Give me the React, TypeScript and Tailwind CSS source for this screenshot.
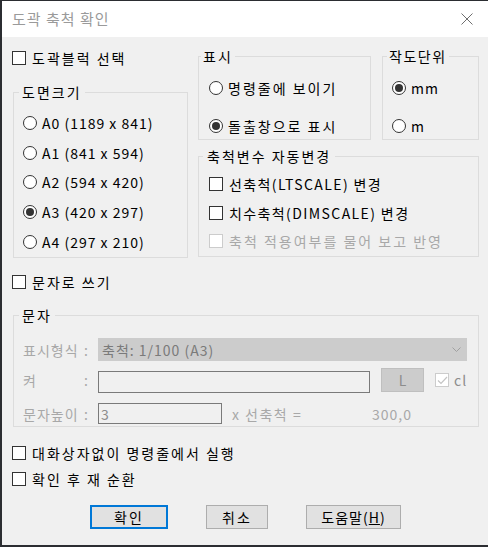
import React from 'react';

function Check({ checked = false, disabled = false }: { checked?: boolean; disabled?: boolean }) {
  return (
    <span
      className={`flex h-[14px] w-[14px] shrink-0 items-center justify-center border ${
        disabled ? 'border-[#cccccc] bg-white' : 'border-[#333333] bg-white'
      }`}
    >
      {checked && (
        <svg width="11" height="9" viewBox="0 0 11 9">
          <path d="M1 4.5 L4 7.5 L10 1" fill="none" stroke={disabled ? '#c4c4c4' : '#333'} strokeWidth="1.2" />
        </svg>
      )}
    </span>
  );
}

function Radio({ checked = false }: { checked?: boolean }) {
  return (
    <span className="flex h-[14px] w-[14px] shrink-0 items-center justify-center rounded-full border border-[#333333] bg-white">
      {checked && <span className="h-[8px] w-[8px] rounded-full bg-[#333333]" />}
    </span>
  );
}

function CheckRow({ label, disabled = false, tight = false }: { label: string; disabled?: boolean; tight?: boolean }) {
  return (
    <div className="flex h-[16px] items-center gap-[6px]">
      <Check disabled={disabled} />
      <span className={`${disabled ? 'text-[#a8a8a8]' : 'text-black'} ${tight ? 'tracking-[1.4px]' : ''}`}>{label}</span>
    </div>
  );
}

function RadioRow({ label, checked = false, tight = false }: { label: string; checked?: boolean; tight?: boolean }) {
  return (
    <div className="flex h-[16px] items-center gap-[5px]">
      <Radio checked={checked} />
      <span className={tight ? 'tracking-[1px]' : ''}>{label}</span>
    </div>
  );
}

function FieldLabel({ text }: { text: string }) {
  return (
    <div className="ml-[4px] flex w-[66px] shrink-0 justify-between tracking-[1px] text-[#a8a8a8]">
      <span>{text}</span>
      <span>:</span>
    </div>
  );
}

const sizes = [
  { label: 'A0 (1189 x 841)', checked: false },
  { label: 'A1 (841 x 594)', checked: false },
  { label: 'A2 (594 x 420)', checked: false },
  { label: 'A3 (420 x 297)', checked: true },
  { label: 'A4 (297 x 210)', checked: false },
];

export default function App() {
  return (
    <div className="flex h-[547px] w-[488px] flex-col overflow-hidden border-b-2 border-l-2 border-t border-[#2b2d31] bg-[#f0f0f0] font-[family-name:'Noto_Sans_CJK_KR',sans-serif] text-[14px] leading-[16px] tracking-[2px] text-black">
      {/* title bar */}
      <div className="flex h-[36px] shrink-0 items-center justify-between bg-white pl-[10px] pr-[15px]">
        <span className="text-[15px] tracking-[1px] text-[#9a9a9a]">도곽 축척 확인</span>
        <svg width="12" height="12" viewBox="0 0 12 12">
          <path d="M0.5 0.5 L11.5 11.5 M11.5 0.5 L0.5 11.5" stroke="#6e6e6e" strokeWidth="1" />
        </svg>
      </div>

      <div className="flex flex-col pl-[10px]">
        {/* top section */}
        <div className="flex pt-[11px]">
          <div className="flex w-[176px] flex-col">
            <div className="mt-[2px]">
              <CheckRow label="도곽블럭 선택" />
            </div>
            <fieldset className="ml-[1px] mt-[18px] h-[174px] w-[175px] border border-[#dcdcdc] pl-[5px]">
              <legend className="px-[3px] leading-[16px]">도면크기</legend>
              <div className="ml-[4px] mt-[8px] flex flex-col">
                {sizes.map((s) => (
                  <div key={s.label} className="flex h-[29.75px] items-center">
                    <RadioRow label={s.label} checked={s.checked} tight />
                  </div>
                ))}
              </div>
            </fieldset>
          </div>

          <div className="ml-[10px] flex flex-col">
            <div className="flex gap-[11px]">
              <fieldset className="h-[92px] w-[173px] border border-[#dcdcdc] pl-[2px]">
                <legend className="px-[2px] leading-[16px]">표시</legend>
                <div className="ml-[8px] mt-[16px] flex flex-col gap-[22px]">
                  <RadioRow label="명령줄에 보이기" />
                  <RadioRow label="돌출창으로 표시" checked />
                </div>
              </fieldset>
              <fieldset className="h-[92px] w-[97px] border border-[#dcdcdc] pl-[4px]">
                <legend className="px-[2px] leading-[16px] tracking-[1.5px]">작도단위</legend>
                <div className="ml-[5px] mt-[16px] flex flex-col gap-[22px]">
                  <RadioRow label="mm" checked tight />
                  <RadioRow label="m" tight />
                </div>
              </fieldset>
            </div>
            <fieldset className="mt-[8px] h-[109px] w-[281px] border border-[#dcdcdc] pl-[4px]">
              <legend className="px-[4px] leading-[16px]">축척변수 자동변경</legend>
              <div className="ml-[6px] mt-[12px] flex flex-col gap-[12.5px]">
                <CheckRow label="선축척(LTSCALE) 변경" tight />
                <CheckRow label="치수축척(DIMSCALE) 변경" tight />
                <CheckRow label="축척 적용여부를 물어 보고 반영" disabled />
              </div>
            </fieldset>
          </div>
        </div>

        <div className="mt-[16px]">
          <CheckRow label="문자로 쓰기" />
        </div>

        {/* text group */}
        <fieldset className="ml-[1px] mt-[17px] h-[120px] w-[466px] border border-[#dcdcdc] pl-[5px]">
          <legend className="px-[3px] leading-[16px]">문자</legend>
          <div className="mt-[15px] flex items-center">
            <FieldLabel text="표시형식" />
            <div className="ml-[9px] flex h-[23px] w-[369px] items-center justify-between border border-[#cccccc] bg-[#cccccc] pl-[3px] pr-[5px] tracking-[1px] text-[#7a7a7a]">
              <span>축척: 1/100 (A3)</span>
              <svg width="9" height="5" viewBox="0 0 9 5">
                <path d="M0.5 0.5 L4.5 4.5 L8.5 0.5" fill="none" stroke="#a0a0a0" strokeWidth="1" />
              </svg>
            </div>
          </div>
          <div className="mt-[6px] flex items-center">
            <FieldLabel text="켜" />
            <div className="ml-[9px] mt-[4px] h-[22px] w-[272px] border border-[#7a7a7a]" />
            <div className="ml-[11px] flex h-[24px] w-[43px] items-center justify-center border border-[#bfbfbf] bg-[#cccccc] tracking-normal text-[#8c8c8c]">
              L
            </div>
            <div className="ml-[11px] flex items-center gap-[5px]">
              <Check checked disabled />
              <span className="tracking-[1px] text-[#8c8c8c]">cl</span>
            </div>
          </div>
          <div className="mt-[10px] flex items-center">
            <FieldLabel text="문자높이" />
            <div className="ml-[9px] flex h-[21px] w-[124px] items-center border border-[#7a7a7a] pl-[2px] text-[#8c8c8c]">
              3
            </div>
            <span className="ml-[10px] w-[140px] shrink-0 tracking-[1.5px] text-[#a8a8a8]">x 선축척 =</span>
            <span className="tracking-[1px] text-[#a8a8a8]">300,0</span>
          </div>
        </fieldset>

        <div className="mt-[18px] flex flex-col gap-[10px]">
          <CheckRow label="대화상자없이 명령줄에서 실행" />
          <CheckRow label="확인 후 재 순환" />
        </div>

        <div className="ml-[78px] mt-[18px] flex gap-[38px]">
          <button className="flex h-[24px] w-[78px] items-center justify-center border-2 border-[#0078d7] bg-[#e1e1e1]">
            확인
          </button>
          <button className="flex h-[24px] w-[62px] items-center justify-center border border-[#adadad] bg-[#e1e1e1]">
            취소
          </button>
          <button className="flex h-[24px] w-[95px] items-center justify-center border border-[#adadad] bg-[#e1e1e1] tracking-[1px]">
            도움말(<span className="underline">H</span>)
          </button>
        </div>
      </div>
    </div>
  );
}
